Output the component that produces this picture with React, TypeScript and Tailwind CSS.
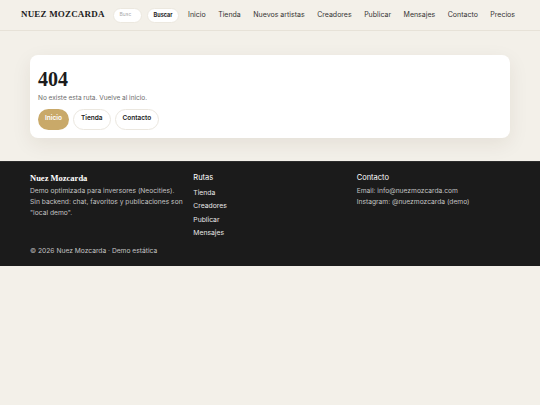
import React from "react";

const sans = { fontFamily: "Inter, 'Noto Sans', sans-serif" };
const serif = { fontFamily: "'Liberation Serif', serif" };

export default function App() {
  const nav = ["Inicio", "Tienda", "Nuevos artistas", "Creadores", "Publicar", "Mensajes", "Contacto", "Precios"];
  return (
    <div className="min-h-[405px] bg-[#f3f0e9] text-[#1b1b1b] antialiased" style={sans}>
      <header className="h-[31px] border-b border-[#e7e2d8] flex items-center pl-[21px] pr-[25px] whitespace-nowrap">
        <div className="flex items-center">
          <span className="text-[9px] font-bold tracking-[0.02em] text-[#1d1d1d]" style={serif}>
            NUEZ MOZCARDA
          </span>
          <div className="ml-[8px] w-[29px] h-[15px] rounded-full bg-white border border-[#ece8df] flex items-center pl-[6px] text-[5px] text-[#aaa]">
            Busc
          </div>
          <div className="ml-[5px] h-[15px] px-[6px] rounded-full bg-white border border-[#ece8df] flex items-center text-[5.5px] font-bold text-[#222]">
            Buscar
          </div>
        </div>
        <nav className="ml-auto flex items-center gap-[12.5px] text-[7px] text-[#333]">
          {nav.map((n) => (
            <span key={n}>{n}</span>
          ))}
        </nav>
      </header>

      <main className="px-[30px] pt-[24px] pb-[23px]">
        <div className="bg-white rounded-[8px] shadow-[0_6px_20px_rgba(60,40,10,0.08)] px-[8px] pt-[12px] pb-[8px]">
          <h1 className="text-[20px] font-bold leading-[24px] text-[#1b1b1b]" style={serif}>
            404
          </h1>
          <p className="mt-[3px] text-[6.5px] text-[#6b6b6b]">No existe esta ruta. Vuelve al inicio.</p>
          <div className="mt-[5px] flex gap-[4px]">
            <span className="h-[21px] px-[7px] rounded-full bg-[#c9a969] text-white text-[6.5px] font-semibold flex items-center">Inicio</span>
            <span className="h-[21px] px-[7px] rounded-full bg-white border border-[#ebe7df] text-[#1b1b1b] text-[6.5px] font-semibold flex items-center">Tienda</span>
            <span className="h-[21px] px-[7px] rounded-full bg-white border border-[#ebe7df] text-[#1b1b1b] text-[6.5px] font-semibold flex items-center">Contacto</span>
          </div>
        </div>
      </main>

      <footer className="bg-[#1b1b1b] border-t border-[#2c2c2c] px-[30px] pt-[10px] pb-[9px] text-[#c9c9c9]">
        <div className="grid grid-cols-3 gap-[10px]">
          <div>
            <div className="text-[8.5px] font-bold text-white leading-[12px]" style={serif}>Nuez Mozcarda</div>
            <p className="mt-[2px] text-[6.7px] leading-[11px] text-[#c2c2c2]">
              Demo optimizada para inversores (Neocities). Sin backend: chat, favoritos y publicaciones son "local demo".
            </p>
          </div>
          <div>
            <div className="text-[7.5px] text-white leading-[12px]">Rutas</div>
            <div className="mt-[2px] flex flex-col text-[6.8px] leading-[13.5px] text-[#e8e8e8]">
              <span>Tienda</span>
              <span>Creadores</span>
              <span>Publicar</span>
              <span>Mensajes</span>
            </div>
          </div>
          <div>
            <div className="text-[7.5px] text-white leading-[12px]">Contacto</div>
            <div className="mt-[2px] flex flex-col text-[6.7px] leading-[11px] text-[#c2c2c2]">
              <span>Email: info@nuezmozcarda.com</span>
              <span>Instagram: @nuezmozcarda (demo)</span>
            </div>
          </div>
        </div>
        <div className="mt-[6px] text-[6.7px] text-[#c2c2c2] leading-[11px]">© 2026 Nuez Mozcarda · Demo estática</div>
      </footer>
    </div>
  );
}
